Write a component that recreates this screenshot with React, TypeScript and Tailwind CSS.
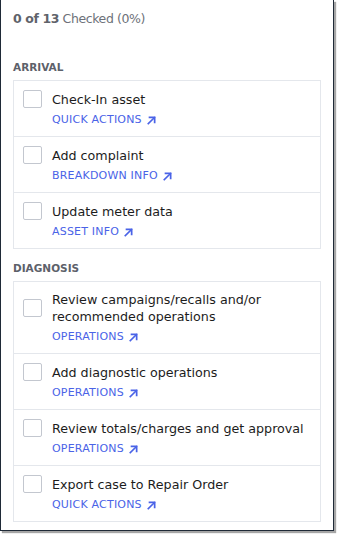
type Item = { title: string; link: string };

const sections: { name: string; items: Item[] }[] = [
  {
    name: "Arrival",
    items: [
      { title: "Check-In asset", link: "Quick actions" },
      { title: "Add complaint", link: "Breakdown info" },
      { title: "Update meter data", link: "Asset info" },
    ],
  },
  {
    name: "Diagnosis",
    items: [
      { title: "Review campaigns/recalls and/or recommended operations", link: "Operations" },
      { title: "Add diagnostic operations", link: "Operations" },
      { title: "Review totals/charges and get approval", link: "Operations" },
      { title: "Export case to Repair Order", link: "Quick actions" },
    ],
  },
];

const ArrowIcon = () => (
  <svg width="9" height="9" viewBox="0 0 10 10" fill="none" stroke="currentColor" strokeWidth="1.9" strokeLinecap="square">
    <path d="M1.5 8.5 L8.2 1.8" />
    <path d="M2.8 1.5 H8.5 V7.2" />
  </svg>
);

const Row = ({ item, first }: { item: Item; first: boolean }) => {
  return (
    <div className={`pl-[9px] pr-[8px] pt-[9px] pb-[9px] ${first ? "" : "border-t border-[#e4e7ec]"}`}>
      <div className="flex items-center gap-[10px]">
        <div className="w-[19px] h-[18px] shrink-0 rounded-[2px] border border-[#c3c7cf] bg-white"></div>
        <span className="text-[12.7px] leading-[17px] text-[#1c1c1c]">{item.title}</span>
      </div>
      <a className="mt-[5px] ml-[29px] flex items-center gap-[5px] text-[11px] leading-[14px] tracking-[0.2px] uppercase text-[#4a63e7]">
        {item.link}
        <ArrowIcon />
      </a>
    </div>
  );
};

export default function App() {
  return (
    <div className="w-[339px] h-[535px] bg-white" style={{ fontFamily: "'DejaVu Sans', sans-serif" }}>
      <div className="w-[334px] h-[531px] border-x border-b border-[#1f2a37] shadow-[2px_2px_1px_rgba(0,0,0,0.35)] pl-[12px] pr-[12px] pt-[10px]">
        <p className="text-[12.5px] leading-[18px] tracking-[-0.4px] text-[#6d7179]">
          <span className="font-bold text-[#5f636b]">0 of 13</span> Checked (0%)
        </p>
        {sections.map((s, i) => (
          <div key={s.name} className={i === 0 ? "mt-[32px]" : "mt-[12px]"}>
            <h3 className="text-[10.5px] leading-[14px] font-semibold uppercase text-[#5d616a] mb-[6px]">{s.name}</h3>
            <div className="border border-[#e4e7ec]">
              {s.items.map((it, j) => (
                <Row key={it.title} item={it} first={j === 0} />
              ))}
            </div>
          </div>
        ))}
      </div>
    </div>
  );
}
